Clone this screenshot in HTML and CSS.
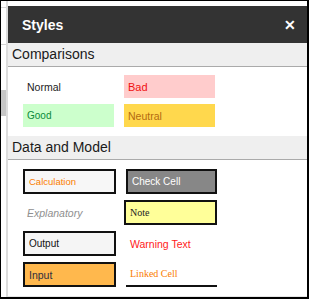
FILE: index.html
```html
<!DOCTYPE html>
<html lang="en">
<head>
  <meta charset="UTF-8" />
  <title>Styles</title>
  <link rel="stylesheet" href="styles.css">
</head>
<body>
  <div class="frame">
    <div class="sheet-edge">
      <div class="edge-row"></div>
      <div class="edge-row selected"></div>
    </div>

    <div class="pane">
      <div class="pane-header">
        <span class="pane-title">Styles</span>
        <span class="close">&#x2715;</span>
      </div>

      <h2 class="group-title">Comparisons</h2>
      <div class="group compare">
        <div class="cell normal">Normal</div>
        <div class="cell bad">Bad</div>
        <div class="cell good">Good</div>
        <div class="cell neutral">Neutral</div>
      </div>

      <h2 class="group-title">Data and Model</h2>
      <div class="group model">
        <div class="cell calculation">Calculation</div>
        <div class="cell check">Check Cell</div>
        <div class="cell explanatory">Explanatory</div>
        <div class="cell note">Note</div>
        <div class="cell output">Output</div>
        <div class="cell warning">Warning Text</div>
        <div class="cell input">Input</div>
        <div class="cell linked">Linked Cell</div>
      </div>
    </div>
  </div>
</body>
</html>
```

FILE: styles.css
```css
body {
  margin: 0;
  font-family: "Liberation Sans", Arial, sans-serif;
  background-color: #fff;
}

.frame {
  display: flex;
  width: 306px;
  height: 296px;
  border-style: solid;
  border-color: #000;
  border-width: 1px 2px 2px 1px;
  background-color: #fff;
  overflow: hidden;
}

.sheet-edge {
  width: 5px;
  flex: none;
  border-right: 2px solid #dcdcdc;
  padding-top: 6px;
}

.edge-row {
  height: 36px;
  border-top: 1px solid #d4d4d4;
  border-bottom: 1px solid #d4d4d4;
}

.edge-row.selected {
  margin-top: 45px;
  height: 26px;
  border: none;
  background-color: #c6c6c6;
}

.pane {
  flex: 1;
  margin-top: 5px;
  border-bottom: 1px solid #e6e6e6;
  background-color: #fff;
}

.pane-header {
  height: 37px;
  background-color: #333;
  color: #fff;
  display: flex;
  align-items: center;
  justify-content: space-between;
  padding: 0 11px 0 14px;
}

.pane-title {
  font-size: 14px;
  font-weight: bold;
}

.close {
  font-size: 14px;
  font-weight: bold;
}

.group-title {
  margin: 0;
  height: 23px;
  line-height: 23px;
  padding-left: 4px;
  font-size: 14px;
  font-weight: normal;
  color: #1a1a1a;
  background-color: #efefef;
  border-bottom: 1px solid #aaa;
}

.group {
  display: grid;
  padding: 8px 0 9px 15px;
}

.compare {
  grid-template-columns: 91px 91px;
  grid-auto-rows: 23px;
  column-gap: 10px;
  row-gap: 6px;
}

.model {
  grid-template-columns: 93px 93px;
  grid-auto-rows: 25px;
  column-gap: 8px;
  row-gap: 6px;
  padding-top: 9px;
}

.cell {
  box-sizing: border-box;
  display: flex;
  align-items: center;
  padding-left: 4px;
  font-size: 10.5px;
  color: #222;
}

.bad { background-color: #ffcccc; color: #f01010; font-size: 11px; }
.good { background-color: #ccffcc; color: #0a8a3a; font-size: 10px; }
.neutral { background-color: #ffd84d; color: #b46a10; }

.calculation {
  border: 2px solid #111;
  background-color: #f7f7f7;
  color: #fa7d00;
  font-size: 9.5px;
}

.check {
  margin-left: 2px;
  border: 2px solid #111;
  background-color: #878787;
  color: #fff;
  font-size: 10px;
}

.explanatory {
  color: #8f8f8f;
  font-style: italic;
}

.note {
  border: 2px solid #111;
  background-color: #ffff99;
  font-family: "Liberation Serif", "Times New Roman", serif;
  font-size: 10px;
}

.output {
  border: 2px solid #111;
  background-color: #f5f5f5;
  color: #111;
  font-size: 10px;
}

.warning {
  padding-left: 6px;
  color: #ff1a1a;
}

.input {
  border: 2px solid #111;
  background-color: #ffb84d;
  color: #2e2e3e;
  font-size: 10.5px;
}

.linked {
  margin-left: 2px;
  width: 91px;
  border-bottom: 2px solid #111;
  color: #fa7d00;
  font-family: "Liberation Serif", "Times New Roman", serif;
  font-size: 10px;
}
```
